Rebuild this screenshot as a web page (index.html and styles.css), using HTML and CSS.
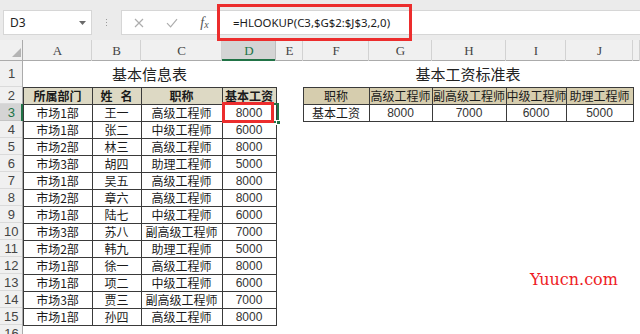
FILE: index.html
```html
<!DOCTYPE html>
<html lang="zh-CN">
<head>
<meta charset="utf-8">
<title>HLOOKUP</title>
<link rel="stylesheet" href="styles.css">
</head>
<body>
<div class="app">
  <div class="fbar">
    <div class="namebox"><span>D3</span><svg width="7" height="4" viewBox="0 0 7 4"><path d="M0 0h7L3.5 4z" fill="#6a6a6a"/></svg></div>
    <div class="grip"><i></i><i></i><i></i></div>
    <div class="finput">
      <span class="ico ico-x"><svg width="10" height="10" viewBox="0 0 10 10"><path d="M1 1l8 8M9 1l-8 8" stroke="#adadad" stroke-width="1.2" fill="none"/></svg></span>
      <span class="ico ico-ok"><svg width="12" height="10" viewBox="0 0 12 10"><path d="M1 5.2l3.6 3.6L11 1.2" stroke="#adadad" stroke-width="1.2" fill="none"/></svg></span>
      <span class="ico ico-fx"><span class="f">f</span><span class="x">x</span></span>
      <span class="formula">=HLOOKUP(C3,$G$2:$J$3,2,0)</span>
      <div class="callout callout-f"></div>
    </div>
  </div>
  <table class="sheet">
    <colgroup>
      <col class="w-rh"><col class="w-a"><col class="w-b"><col class="w-c"><col class="w-d"><col class="w-e"><col class="w-f"><col class="w-g"><col class="w-h"><col class="w-i"><col class="w-j"><col class="w-k">
    </colgroup>
    <tr class="hdr">
      <td class="corner"><svg width="9" height="9" viewBox="0 0 9 9"><path d="M9 0V9H0z" fill="#b4b4b4"/></svg></td>
      <td class="ch">A</td><td class="ch">B</td><td class="ch">C</td><td class="ch sel">D</td><td class="ch">E</td><td class="ch">F</td><td class="ch">G</td><td class="ch">H</td><td class="ch">I</td><td class="ch">J</td><td class="ch"></td>
    </tr>
    <tr class="r1">
      <td class="rh">1</td><td colspan="4" class="title">基本信息表</td><td></td><td colspan="5" class="title">基本工资标准表</td><td></td>
    </tr>
    <tr>
      <td class="rh">2</td><td class="c th">所属部门</td><td class="c th">姓&nbsp;&nbsp;&nbsp;名</td><td class="c th">职称</td><td class="c th">基本工资</td><td></td>
      <td class="c th2">职称</td><td class="c th2">高级工程师</td><td class="c th2">副高级工程师</td><td class="c th2">中级工程师</td><td class="c th2">助理工程师</td><td></td>
    </tr>
    <tr>
      <td class="rh sel">3</td><td class="c">市场1部</td><td class="c">王一</td><td class="c">高级工程师</td><td class="c num active">8000<span class="cur"></span><span class="handle"></span><span class="callout callout-c"></span></td><td></td>
      <td class="c">基本工资</td><td class="c num">8000</td><td class="c num">7000</td><td class="c num">6000</td><td class="c num">5000</td><td></td>
    </tr>
    <tr><td class="rh">4</td><td class="c">市场1部</td><td class="c">张二</td><td class="c">中级工程师</td><td class="c num">6000</td><td colspan="7"></td></tr>
    <tr><td class="rh">5</td><td class="c">市场2部</td><td class="c">林三</td><td class="c">高级工程师</td><td class="c num">8000</td><td colspan="7"></td></tr>
    <tr><td class="rh">6</td><td class="c">市场3部</td><td class="c">胡四</td><td class="c">助理工程师</td><td class="c num">5000</td><td colspan="7"></td></tr>
    <tr><td class="rh">7</td><td class="c">市场1部</td><td class="c">吴五</td><td class="c">高级工程师</td><td class="c num">8000</td><td colspan="7"></td></tr>
    <tr><td class="rh">8</td><td class="c">市场2部</td><td class="c">章六</td><td class="c">高级工程师</td><td class="c num">8000</td><td colspan="7"></td></tr>
    <tr><td class="rh">9</td><td class="c">市场1部</td><td class="c">陆七</td><td class="c">中级工程师</td><td class="c num">6000</td><td colspan="7"></td></tr>
    <tr><td class="rh">10</td><td class="c">市场3部</td><td class="c">苏八</td><td class="c">副高级工程师</td><td class="c num">7000</td><td colspan="7"></td></tr>
    <tr><td class="rh">11</td><td class="c">市场2部</td><td class="c">韩九</td><td class="c">助理工程师</td><td class="c num">5000</td><td colspan="7"></td></tr>
    <tr><td class="rh">12</td><td class="c">市场1部</td><td class="c">徐一</td><td class="c">高级工程师</td><td class="c num">8000</td><td colspan="7"></td></tr>
    <tr><td class="rh">13</td><td class="c">市场1部</td><td class="c">项二</td><td class="c">中级工程师</td><td class="c num">6000</td><td colspan="7"></td></tr>
    <tr><td class="rh">14</td><td class="c">市场3部</td><td class="c">贾三</td><td class="c">副高级工程师</td><td class="c num">7000</td><td colspan="7"></td></tr>
    <tr><td class="rh">15</td><td class="c">市场1部</td><td class="c">孙四</td><td class="c">高级工程师</td><td class="c num">8000</td><td colspan="7"></td></tr>
    <tr><td class="rh">16</td><td colspan="11"></td></tr>
  </table>
  <div class="wm">Yuucn.com</div>
</div>
</body>
</html>
```
FILE: styles.css
```css
* { box-sizing: border-box; }
html, body { margin: 0; padding: 0; background: #fff; overflow: hidden; }
body { width: 640px; height: 334px; font-family: "Noto Sans CJK SC", "Noto Sans", sans-serif; color: #1e1e1e; }
.app { position: relative; width: 640px; height: 334px; overflow: hidden; }

/* formula bar */
.fbar { display: flex; align-items: flex-start; height: 40px; padding-top: 10px; background: #ebebeb; }
.namebox { width: 89px; height: 25px; margin-left: 3px; background: #fff; border: 1px solid #d6d6d6; display: flex; align-items: center; justify-content: space-between; padding: 0 5px 0 6px; font: 12px "Noto Sans", sans-serif; color: #222; }
.grip { width: 29px; height: 25px; display: flex; flex-direction: column; align-items: center; justify-content: center; gap: 2px; }
.grip i { display: block; width: 1px; height: 1px; background: #9a9a9a; }
.finput { position: relative; flex: 1; height: 25px; background: #fff; border: 1px solid #d6d6d6; border-right: 0; display: flex; align-items: center; }
.ico { height: 100%; display: flex; align-items: center; justify-content: center; }
.ico-x { width: 33px; }
.ico-ok { width: 33px; }
.ico-fx { width: 33px; font-family: "Liberation Serif", serif; font-style: italic; color: #555; }
.ico-fx .f { font-size: 14px; }
.ico-fx .x { font-size: 10px; margin-top: 3px; }
.formula { padding-left: 12px; font: 11.4px "Noto Sans", sans-serif; color: #1a1a1a; white-space: nowrap; }
.callout { position: absolute; border: 3px solid #ec2d2d; pointer-events: none; }
.callout-f { left: 95px; top: -7px; width: 195px; height: 37px; }

/* sheet */
.sheet { border-collapse: collapse; table-layout: fixed; width: 640px; }
.w-rh { width: 23px; } .w-a { width: 69px; } .w-b { width: 49px; } .w-c { width: 81px; } .w-d { width: 54px; }
.w-e { width: 27px; } .w-f { width: 66px; } .w-g { width: 63px; } .w-h { width: 74px; } .w-i { width: 60px; } .w-j { width: 67px; } .w-k { width: 7px; }
.sheet td { padding: 0; height: 17px; text-align: center; vertical-align: middle; white-space: nowrap; font-size: 12px; line-height: 14px; }
.sheet tr.hdr td { height: 21px; }
.sheet tr.r1 td { height: 26px; }

.corner { background: #f0f0f0; box-shadow: inset -1px 0 #ababab, inset 0 -1px #ababab; text-align: right !important; vertical-align: bottom !important; padding: 0 2px 4px 0 !important; line-height: 0 !important; }
.ch { background: #f0f0f0; box-shadow: inset -1px 0 #d2d2d2, inset 0 -1px #ababab; font-family: "Liberation Serif", serif; font-size: 13px !important; color: #444; }
.ch.sel { background: #d4d4d4; color: #217346; box-shadow: inset -1px 0 #bdbdbd, inset 0 -2px #217346; }
.rh { background: #f0f0f0; box-shadow: inset -1px 0 #ababab, inset 0 -1px #dadada; font-family: "Liberation Sans", sans-serif; font-size: 13px !important; color: #444; }
.rh.sel { background: #d4d4d4; color: #217346; box-shadow: inset -2px 0 #217346, inset 0 -1px #c4c4c4; }

.title { font-size: 15px !important; color: #222; }
.c { border: 1px solid #3a3a3a; color: #1a1a1a; }
.th { background: #ddd9c4; font-weight: 700; }
.th2 { background: #d6cdae; }
.num { font-family: "Liberation Sans", sans-serif; color: #333 !important; }

.active { position: relative; }
.active .cur { position: absolute; left: -1px; top: -2px; right: -3px; bottom: -2px; border: 2px solid #217346; }
.active .handle { position: absolute; right: -5px; bottom: -4px; width: 5px; height: 5px; background: #217346; border: 1px solid #fff; }
.callout-c { left: -1px; top: -3px; right: 2px; bottom: -2px; }

.wm { position: absolute; left: 530px; top: 272px; font: 16px/1 "DejaVu Serif", serif; color: #ee1c25; }
```
